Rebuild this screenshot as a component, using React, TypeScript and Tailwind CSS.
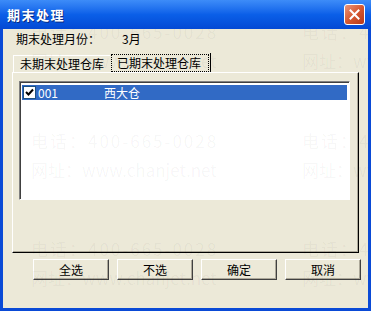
import React from 'react';

const font = { fontFamily: '"Noto Sans CJK SC", "Liberation Sans", sans-serif' };

const WatermarkBlock: React.FC<{ left: number; top: number }> = ({ left, top }) => (
  <div
    className="absolute whitespace-nowrap text-[17px] leading-[29px] text-black/[0.045]"
    style={{ left, top }}
  >
    <div className="tracking-[2px]">电话：400-665-0028</div>
    <div>网址：www.chanjet.net</div>
  </div>
);

const CheckBox: React.FC = () => (
  <span className="flex h-[13px] w-[13px] items-center justify-center border border-[#1c5180] bg-white">
    <svg width="9" height="9" viewBox="0 0 9 9">
      <path d="M1 4 L3.5 6.5 L8 1.5" stroke="#000" strokeWidth="2" fill="none" />
    </svg>
  </span>
);

const ClassicButton: React.FC<{ label: string }> = ({ label }) => (
  <button className="h-[21px] w-[76px] border border-t-white border-l-white border-r-[#404040] border-b-[#404040] bg-[#ece9d8] text-[12px] leading-none text-black shadow-[inset_-1px_-1px_0_#aca899]">
    {label}
  </button>
);

const App: React.FC = () => {
  const buttons = ['全选', '不选', '确定', '取消'];

  return (
    <div className="flex h-[311px] w-[371px] flex-col bg-[#0a4ad6]" style={font}>
      {/* title bar */}
      <div className="flex h-[29px] shrink-0 items-center justify-between bg-gradient-to-b from-[#3d8cf8] via-[#0b5fe8] to-[#0449d4] pl-[7px] pr-[6px]">
        <span className="text-[13px] font-bold tracking-[1.5px] text-white [text-shadow:1px_1px_0_#0a2a80]">
          期末处理
        </span>
        <span className="flex h-[21px] w-[21px] items-center justify-center rounded-[3px] border border-white bg-gradient-to-br from-[#e9957a] via-[#d6582f] to-[#b5381a]">
          <svg width="11" height="11" viewBox="0 0 11 11">
            <path d="M1.5 1.5 L9.5 9.5 M9.5 1.5 L1.5 9.5" stroke="#fff" strokeWidth="2" strokeLinecap="square" />
          </svg>
        </span>
      </div>

      {/* client area */}
      <div className="relative mx-[3px] mb-[3px] flex flex-1 flex-col overflow-hidden bg-[#ece9d8] text-[12px] text-black">
        <div className="mt-[2px] flex h-[16px] items-center pl-[13px]">
          <span>期末处理月份：</span>
          <span className="ml-[22px]">3月</span>
        </div>

        {/* tabs */}
        <div className="mt-[6px] flex h-[19px] items-end pl-[10px]">
          <div className="flex h-[17px] w-[97px] items-center border-l border-t border-white pl-[6px]">
            未期末处理仓库
          </div>
          <div className="flex h-[19px] w-[101px] items-center border-r border-black pl-[1px]">
            <span className="flex h-[18px] w-[98px] items-center border border-dotted border-black pl-[5px]">
              已期末处理仓库
            </span>
          </div>
        </div>

        {/* tab panel */}
        <div className="ml-[9px] h-[181px] w-[347px] border border-b-black border-l-white border-r-black border-t-white pl-[6px] pt-[8px] shadow-[inset_-1px_-1px_0_#aca899]">
          <div className="h-[119px] w-[331px] border border-b-white border-l-[#808080] border-r-white border-t-[#808080] bg-white p-[1px] shadow-[inset_1px_1px_0_#404040]">
            <div className="ml-[1px] mt-[2px] flex h-[15px] w-[325px] items-center bg-[#316ac5] text-white">
              <span className="ml-[1px]">
                <CheckBox />
              </span>
              <span className="ml-[2px] w-[66px]">001</span>
              <span>西大仓</span>
            </div>
          </div>
        </div>

        {/* buttons */}
        <div className="mt-[6px] flex gap-[8px] pl-[30px]">
          {buttons.map((b) => (
            <ClassicButton key={b} label={b} />
          ))}
        </div>

        {/* watermark overlay */}
        <div className="pointer-events-none absolute inset-0">
          <WatermarkBlock left={28} top={-12} />
          <WatermarkBlock left={299} top={-12} />
          <WatermarkBlock left={28} top={97} />
          <WatermarkBlock left={299} top={97} />
          <WatermarkBlock left={28} top={205} />
          <WatermarkBlock left={299} top={205} />
        </div>
      </div>
    </div>
  );
};

export default App;
